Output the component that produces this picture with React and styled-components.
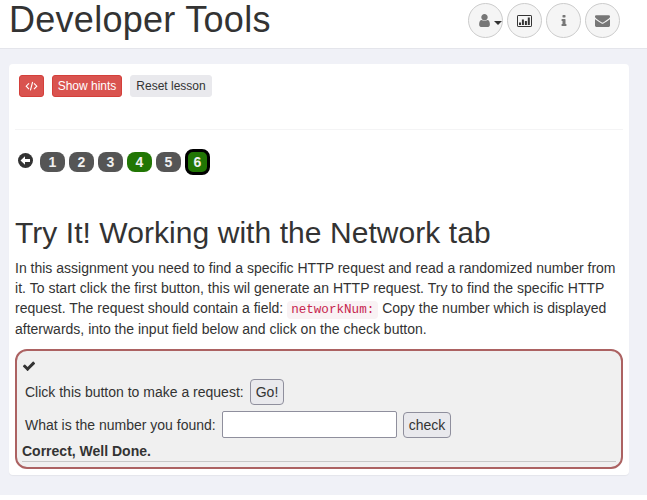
import React from "react";
import styled, { createGlobalStyle, css } from "styled-components";

const Global = createGlobalStyle`
  *, *::before, *::after { box-sizing: border-box; }
  html { background: #fff; }
  body {
    margin: 0;
    font: 14px/20px "Liberation Sans", Arial, sans-serif;
    color: #333;
    overflow: hidden;
  }
`;

const Page = styled.div`
  width: 647px;
  height: 495px;
  background: #f0f1f7;
  overflow: hidden;
`;

const Header = styled.header`
  height: 49px;
  display: flex;
  justify-content: space-between;
  padding: 0 27px 0 9px;
  background: #fff;
  border-bottom: 1px solid #e4e5eb;
`;

const Title = styled.h1`
  margin: 0;
  font-size: 36px;
  font-weight: 400;
  line-height: 40px;
  letter-spacing: 0.28px;
  white-space: nowrap;
`;

const Tools = styled.nav`
  display: flex;
  gap: 4px;
  padding-top: 3px;
`;

const RoundButton = styled.button`
  width: 35px;
  height: 35px;
  display: flex;
  align-items: center;
  justify-content: center;
  gap: 2px;
  padding: 0;
  border: 1px solid #ccc;
  border-radius: 50%;
  background: #f5f5f5;
  color: ${(p) => (p.$dark ? "#333" : "#777")};
  padding-left: ${(p) => (p.$menu ? "7px" : "0")};
`;

const Caret = styled.span`
  border: 4px solid transparent;
  border-top-color: #333;
  border-bottom: 0;
  margin-top: 4px;
`;

const Panel = styled.main`
  width: 620px;
  height: 411px;
  margin: 15px 0 0 9px;
  padding: 11px 6px 0;
  background: #fff;
  border-radius: 4px;
  box-shadow: 0 1px 1px rgba(0, 0, 0, 0.05);
`;

const Toolbar = styled.div`
  height: 55px;
  display: flex;
  align-items: flex-start;
  gap: 8px;
  padding-left: 4px;
  border-bottom: 1px solid #f4f4f5;
`;

const SmallButton = styled.button`
  height: 22px;
  width: ${(p) => p.$w}px;
  padding: 0;
  display: flex;
  align-items: center;
  justify-content: center;
  border: 1px solid #e9e9ed;
  border-radius: 3px;
  background: #e9e9ed;
  color: #333;
  font: 12px/18px "Liberation Sans", Arial, sans-serif;
  white-space: nowrap;
  ${(p) =>
    p.$danger &&
    css`
      background: #d9534f;
      border-color: #d43f3a;
      color: #fff;
    `}
`;

const Pager = styled.nav`
  height: 26px;
  display: flex;
  align-items: center;
  gap: 4px;
  margin-top: 19px;
  padding-left: 3px;
`;

const BackIcon = styled.svg`
  width: 15px;
  height: 15px;
  margin: 0 3px 3px 0;
`;

const Pill = styled.span`
  width: 25px;
  height: ${(p) => (p.$current ? 26 : 20)}px;
  display: flex;
  align-items: center;
  justify-content: center;
  border: ${(p) => (p.$current ? "3px solid #000" : "0")};
  border-radius: 8px;
  background: ${(p) => (p.$solved ? "#217604" : "#555")};
  color: #f0f0f0;
  font-size: 14px;
  font-weight: 700;
  line-height: 20px;
`;

const Heading = styled.h2`
  margin: 40px 0 8px;
  font-size: 30px;
  font-weight: 400;
  line-height: 35px;
  letter-spacing: 0.06px;
  white-space: nowrap;
`;

const Text = styled.p`
  margin: 0;
  white-space: nowrap;
`;

const Line = styled.span`
  display: block;
  height: 20px;
  letter-spacing: ${(p) => p.$spacing || 0}px;
  margin-top: ${(p) => p.$top || 0}px;
`;

const Code = styled.code`
  padding: 2px 4px;
  border-radius: 4px;
  background: #f9f2f4;
  color: #c7254e;
  font: 12.6px/15px "Liberation Mono", monospace;
`;

const Attack = styled.section`
  height: 120px;
  margin-top: 10px;
  padding: 8px 5px 0;
  border: 2px solid #ac6262;
  border-radius: 12px;
  background: #f0f0f0;
`;

const CheckIcon = styled.svg`
  display: block;
  width: 14px;
  height: 14px;
`;

const Row = styled.div`
  display: flex;
  align-items: center;
  gap: 6px;
  height: ${(p) => p.$h}px;
  margin-top: 6px;
  padding-left: 3px;
  white-space: nowrap;
`;

const Label = styled.label`
  width: ${(p) => p.$w}px;
`;

const FormButton = styled.button`
  width: ${(p) => p.$w}px;
  height: 26px;
  padding: 0;
  border: 1px solid #8f8f9d;
  border-radius: 4px;
  background: #e9e9ed;
  color: #333;
  font: 14px/20px "Liberation Sans", Arial, sans-serif;
`;

const Field = styled.input`
  width: 175px;
  height: 27px;
  border: 1px solid #8f8f9d;
  border-radius: 2px;
  background: #fff;
`;

const Feedback = styled.div`
  height: 21px;
  margin-top: 3px;
  border-bottom: 1px solid #c8c8c8;
  font-weight: 700;
`;

const UserIcon = () => (
  <svg width="15" height="15" viewBox="0 0 1792 1792" fill="currentColor">
    <path d="M1536 1399q0 109-62.500 187t-150.500 78h-854q-88 0-150.500-78t-62.500-187q0-85 8.500-160.500t31.500-152 58.500-131 94-89 134.500-34.500q131 128 313 128t313-128q76 0 134.500 34.500t94 89 58.500 131 31.500 152 8.500 160.500zm-256-887q0 159-112.500 271.500t-271.500 112.500-271.500-112.500-112.500-271.500 112.500-271.500 271.500-112.500 271.500 112.500 112.500 271.500z" />
  </svg>
);

const ChartIcon = () => (
  <svg width="15" height="12" viewBox="0 0 15 12">
    <rect x=".5" y=".5" width="14" height="11" rx=".6" fill="none" stroke="currentColor" />
    <path fill="currentColor" d="M2 7.500h2V10H2zM4.900 4.500h2V10h-2zM7.900 6h2v4h-2zM10.800 2.500h2V10h-2z" />
  </svg>
);

const InfoIcon = () => (
  <svg width="14" height="14" viewBox="0 0 1792 1792" fill="currentColor">
    <path d="M1216 1344v128q0 26-19 45t-45 19h-512q-26 0-45-19t-19-45v-128q0-26 19-45t45-19h64v-384h-64q-26 0-45-19t-19-45v-128q0-26 19-45t45-19h384q26 0 45 19t19 45v576h64q26 0 45 19t19 45zm-128-1152v192q0 26-19 45t-45 19h-256q-26 0-45-19t-19-45v-192q0-26 19-45t45-19h256q26 0 45 19t19 45z" />
  </svg>
);

const MailIcon = () => (
  <svg width="15" height="15" viewBox="0 0 1792 1792" fill="currentColor">
    <path d="M1792 710v794q0 66-47 113t-113 47h-1472q-66 0-113-47t-47-113v-794q44 49 101 87 362 246 497 345 57 42 92.500 65.500t94.500 48 110 24.500h2q51 0 110-24.500t94.500-48 92.500-65.500q170-123 498-345 57-39 100-87zm0-294q0 79-49 151t-122 123q-376 261-468 325-10 7-42.500 31t-54 38.500-52 32.500-57.500 27-50 9h-2q-23 0-50-9t-57.500-27-52-32.500-54-38.500-42.500-31q-91-64-262-182.500t-205-142.500q-62-42-117-115.500t-55-136.500q0-78 41.500-130t118.500-52h1472q65 0 112.500 47t47.500 113z" />
  </svg>
);

const CodeIcon = () => (
  <svg width="13" height="10" viewBox="0 0 13 10" fill="none" stroke="currentColor" strokeWidth="1.100">
    <path d="M4 2.300L1.200 5.200l2.800 2.900M9 2.300l2.800 2.900L9 8.100M7.600 1L5.400 9.400" />
  </svg>
);

const pages = [
  { n: 1 },
  { n: 2 },
  { n: 3 },
  { n: 4, solved: true },
  { n: 5 },
  { n: 6, solved: true, current: true },
];

export default function App() {
  return (
    <Page>
      <Global />
      <Header>
        <Title>Developer Tools</Title>
        <Tools>
          <RoundButton $menu aria-label="User">
            <UserIcon />
            <Caret />
          </RoundButton>
          <RoundButton $dark aria-label="Report"><ChartIcon /></RoundButton>
          <RoundButton aria-label="About"><InfoIcon /></RoundButton>
          <RoundButton aria-label="Contact"><MailIcon /></RoundButton>
        </Tools>
      </Header>
      <Panel>
        <Toolbar>
          <SmallButton $danger $w={25} aria-label="Source"><CodeIcon /></SmallButton>
          <SmallButton $danger $w={70}>Show hints</SmallButton>
          <SmallButton $w={82}>Reset lesson</SmallButton>
        </Toolbar>
        <Pager>
          <BackIcon viewBox="0 0 15 15">
            <circle cx="7.500" cy="7.500" r="7.500" fill="#333" />
            <path d="M2.500 7.500L7 3.300v2.800h5v2.800H7v2.800z" fill="#fff" />
          </BackIcon>
          {pages.map((p) => (
            <Pill key={p.n} $solved={p.solved} $current={p.current}>{p.n}</Pill>
          ))}
        </Pager>
        <Heading>Try It! Working with the Network tab</Heading>
        <Text>
          <Line>In this assignment you need to find a specific HTTP request and read a randomized number from</Line>
          <Line $spacing={0.025}>it. To start click the first button, this wil generate an HTTP request. Try to find the specific HTTP</Line>
          <Line>request. The request should contain a field: <Code>networkNum:</Code> Copy the number which is displayed</Line>
          <Line $top={1}>afterwards, into the input field below and click on the check button.</Line>
        </Text>
        <Attack>
          <CheckIcon viewBox="0 0 1792 1792">
            <path fill="#333" d="M1671 566q0 40-28 68l-724 724-136 136q-28 28-68 28t-68-28l-136-136-362-362q-28-28-28-68t28-68l136-136q28-28 68-28t68 28l294 295 656-657q28-28 68-28t68 28l136 136q28 28 28 68z" />
          </CheckIcon>
          <Row $h={26}>
            <Label $w={219}>Click this button to make a request:</Label>
            <FormButton $w={34}>Go!</FormButton>
          </Row>
          <Row $h={27}>
            <Label $w={191}>What is the number you found:</Label>
            <Field aria-label="Number" />
            <FormButton $w={48}>check</FormButton>
          </Row>
          <Feedback>Correct, Well Done.</Feedback>
        </Attack>
      </Panel>
    </Page>
  );
}
